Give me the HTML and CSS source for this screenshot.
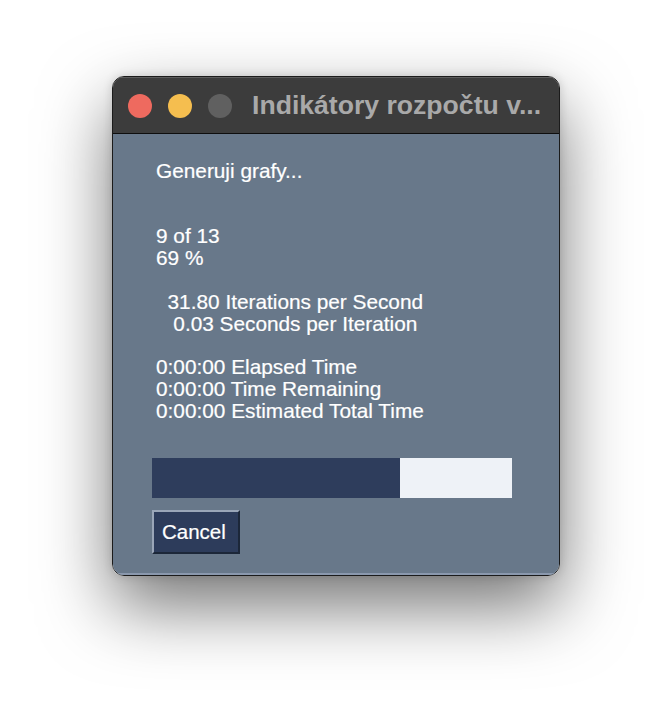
FILE: index.html
```html
<!DOCTYPE html>
<html>
<head>
<meta charset="utf-8">
<link rel="stylesheet" href="styles.css">
</head>
<body>
<div class="window">
  <div class="titlebar">
    <div class="lights">
      <span class="light red"></span>
      <span class="light yellow"></span>
      <span class="light gray"></span>
    </div>
    <div class="title">Indikátory rozpočtu v...</div>
  </div>
  <div class="content">
    <div class="text">Generuji grafy...


9 of 13
69 %

  31.80 Iterations per Second
   0.03 Seconds per Iteration

0:00:00 Elapsed Time
0:00:00 Time Remaining
0:00:00 Estimated Total Time</div>
    <div class="progress"><div class="fill" style="width:248px"></div></div>
    <button class="cancel">Cancel</button>
  </div>
</div>
</body>
</html>
```

FILE: styles.css
```css
html, body {
  margin: 0;
  padding: 0;
  background: #ffffff;
}
body {
  width: 672px;
  height: 724px;
  overflow: hidden;
  font-family: "Liberation Sans", Arial, sans-serif;
}
.window {
  box-sizing: border-box;
  width: 448px;
  height: 500px;
  margin: 76px 0 0 112px;
  border: 1px solid #1b1b1b;
  border-radius: 12px;
  overflow: hidden;
  display: flex;
  flex-direction: column;
  box-shadow: 0 30px 70px rgba(0, 0, 0, 0.55), 0 0 10px rgba(0, 0, 0, 0.15);
}
.titlebar {
  height: 55px;
  flex: none;
  background: #3c3c3c;
  border-bottom: 1px solid #0e0e0e;
  box-shadow: inset 0 1px 0 #5c5c5c;
  display: flex;
  align-items: center;
  padding-left: 15px;
  padding-top: 1px;
  box-sizing: content-box;
}
.lights {
  display: flex;
  gap: 16px;
}
.light {
  width: 24px;
  height: 24px;
  border-radius: 50%;
  display: block;
}
.red { background: #ee6a5f; }
.yellow { background: #f5be4f; }
.gray { background: #606060; }
.title {
  margin-left: 20px;
  color: #a9a9a9;
  font-weight: bold;
  font-size: 26.6px;
  white-space: nowrap;
}
.content {
  flex: 1;
  background: #68788a;
  box-shadow: inset 0 -2px 0 #8a98ad;
  padding: 26px 0 0 39px;
  display: flex;
  flex-direction: column;
  align-items: flex-start;
}
.text {
  margin-left: 4px;
  white-space: pre;
  color: #ffffff;
  font-size: 20.8px;
  line-height: 21.8px;
  -webkit-text-stroke: 0.2px #ffffff;
}
.progress {
  margin-top: 36px;
  width: 360px;
  height: 40px;
  background: #eef2f7;
  display: flex;
}
.fill {
  height: 100%;
  background: #2e3d5c;
}
.cancel {
  margin-top: 12px;
  box-sizing: border-box;
  width: 88px;
  height: 44px;
  padding: 0 0 0 8px;
  text-align: left;
  background: #2d3c5b;
  color: #ffffff;
  font-family: "Liberation Sans", Arial, sans-serif;
  font-size: 20.5px;
  -webkit-text-stroke: 0.2px #ffffff;
  border-style: solid;
  border-width: 2px;
  border-color: #9aa6b8 #1c2739 #1c2739 #9aa6b8;
}
```
